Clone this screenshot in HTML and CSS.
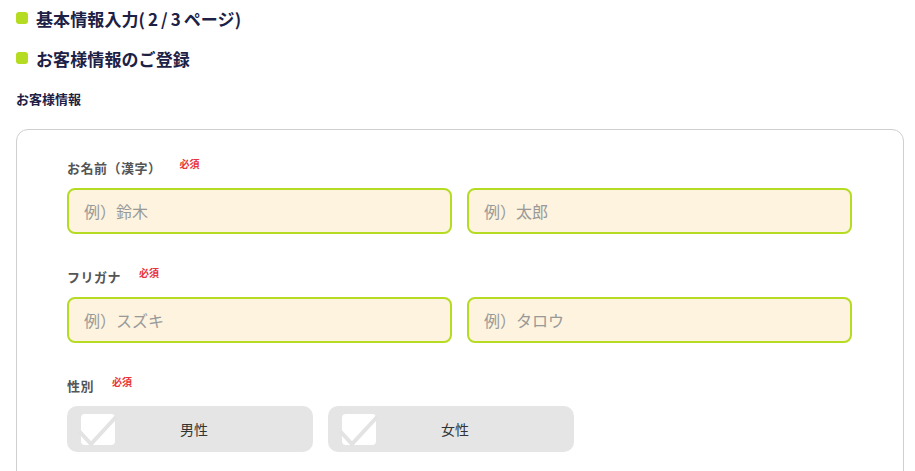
FILE: index.html
```html
<!DOCTYPE html>
<html lang="ja">

<head>
    <meta charset="UTF-8">
    <meta name="viewport" content="width=device-width, initial-scale=1.0">
    <title>お客様情報のご登録</title>
    <link rel="stylesheet" href="styles.css">
</head>

<body>
    <div class="page">
        <h2 class="ttl"><span class="dot"></span><span>基本情報入力<span class="num">(2/3</span>ページ)</span></h2>
        <h2 class="ttl"><span class="dot"></span><span>お客様情報のご登録</span></h2>
        <p class="sub">お客様情報</p>

        <form class="card">
            <div class="field">
                <div class="label">お名前（漢字）<span class="req">必須</span></div>
                <div class="row">
                    <input type="text" class="txt" placeholder="例）鈴木">
                    <input type="text" class="txt" placeholder="例）太郎">
                </div>
            </div>

            <div class="field">
                <div class="label">フリガナ<span class="req">必須</span></div>
                <div class="row">
                    <input type="text" class="txt" placeholder="例）スズキ">
                    <input type="text" class="txt" placeholder="例）タロウ">
                </div>
            </div>

            <div class="field">
                <div class="label">性別<span class="req">必須</span></div>
                <div class="row">
                    <label class="radio">
                        <input type="radio" name="sex" value="m">
                        <span class="box">
                            <svg width="42" height="36" viewBox="0 0 42 36">
                                <path d="M1 18 L13 31 L38 4" fill="none" stroke="#e3e3e3" stroke-width="4"/>
                            </svg>
                        </span>
                        <span class="rtxt">男性</span>
                    </label>
                    <label class="radio">
                        <input type="radio" name="sex" value="f">
                        <span class="box">
                            <svg width="42" height="36" viewBox="0 0 42 36">
                                <path d="M1 18 L13 31 L38 4" fill="none" stroke="#e3e3e3" stroke-width="4"/>
                            </svg>
                        </span>
                        <span class="rtxt">女性</span>
                    </label>
                </div>
            </div>
        </form>
    </div>
</body>

</html>
```

FILE: styles.css
```css
body{
    margin: 0;
    background-color: #fff;
    font-family: "Noto Sans CJK JP", "Noto Sans", sans-serif;
    color: #1c2145;
}
.page{
    padding: 4px 11px 0 16px;
}
.ttl{
    display: flex;
    align-items: center;
    gap: 8px;
    height: 28px;
    margin: 0 0 12px;
    font-size: 17px;
    font-weight: bold;
    letter-spacing: 0.1px;
}
.num{
    letter-spacing: 3px;
}
.dot{
    width: 12px;
    height: 12px;
    border-radius: 3px;
    background-color: #b5dc22;
}
.sub{
    margin: 17px 0 20px;
    font-size: 13px;
    line-height: 20px;
    font-weight: bold;
}
.card{
    border: 1px solid #cfcfcf;
    border-radius: 12px;
    padding: 28px 50px 40px;
    display: flex;
    flex-direction: column;
    gap: 33px;
}
.label{
    font-size: 13px;
    line-height: 20px;
    font-weight: bold;
    letter-spacing: 0.5px;
    color: #555;
    margin-bottom: 10px;
    display: flex;
    align-items: flex-start;
}
.req{
    font-size: 10px;
    line-height: 14px;
    letter-spacing: 0;
    color: #e8343a;
    margin-left: 18px;
    margin-top: -1px;
}
.row{
    display: flex;
    gap: 15px;
}
.txt{
    box-sizing: border-box;
    width: 385px;
    height: 46px;
    border: 2px solid #b5dc22;
    border-radius: 8px;
    background-color: #fdf3de;
    padding: 0 15px;
    font-family: inherit;
    font-size: 16px;
    color: #333;
    outline: none;
}
.txt::placeholder{
    color: #999;
}
.radio{
    box-sizing: border-box;
    width: 246px;
    height: 46px;
    border-radius: 10px;
    background-color: #e5e5e5;
    display: flex;
    align-items: center;
    position: relative;
    padding-left: 14px;
}
.radio input{
    display: none;
}
.box{
    width: 34px;
    height: 31px;
    border-radius: 4px;
    background-color: #fff;
    position: relative;
}
.box svg{
    position: absolute;
    left: -3px;
    top: -1px;
}
.rtxt{
    flex: 1;
    text-align: center;
    padding-right: 40px;
    font-size: 14px;
    color: #333;
}
```
